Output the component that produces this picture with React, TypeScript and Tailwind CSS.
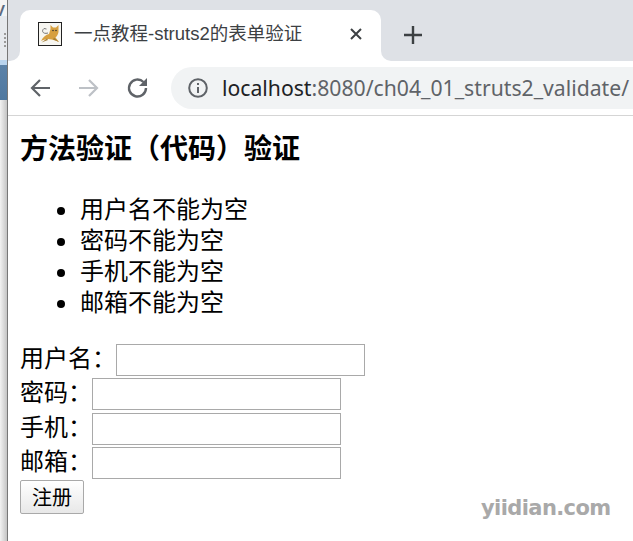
const cjk = "font-['Liberation_Sans','Noto_Sans_CJK_SC',sans-serif]";

function Row({ label, gap, mt }: { label: string; gap: string; mt: string }) {
  return (
    <div className={`flex items-center h-[32px] ${mt}`}>
      <span className={`${gap} pb-[3px]`}>{label}</span>
      <div className="w-[249px] h-[32px] border border-[#a9a9a9] bg-white shrink-0" />
    </div>
  );
}

function Item({ text }: { text: string }) {
  return (
    <li className="flex items-center">
      <span className="w-[8px] h-[8px] rounded-full bg-black mr-[15px] mt-[2px] shrink-0" />
      {text}
    </li>
  );
}

function Tomcat() {
  return (
    <svg width="24" height="24" viewBox="0 0 24 24" className="shrink-0">
      <rect x="0.5" y="0.5" width="23" height="23" fill="#f7f6f1" stroke="#222" />
      <path d="M3 19 C5 15 8 12.5 11 12 L12.5 7 L12.5 3 L15 5.5 L18 5.5 L20.5 3 L20.5 10 C20 13 18.5 14.5 17.5 15.5 L21 20 L17.5 18.5 C15 18 12 17 10 17 C7.5 17 5 18 3 19Z" fill="#d7a040" />
      <path d="M16 15.5 L21 20 L15 17.5Z M9 16.5 L3.5 20.5 L10 18Z" fill="#a5803a" />
      <path d="M10 11 C5 12.5 3 9 6 6.5 L8.5 7" fill="none" stroke="#777" strokeWidth="1" />
      <circle cx="15" cy="8.5" r="0.8" fill="#333" />
      <circle cx="18" cy="8.5" r="0.8" fill="#333" />
    </svg>
  );
}

export default function App() {
  return (
    <div className={`relative w-[633px] h-[541px] overflow-hidden bg-white flex ${cjk}`}>
      <div className="w-[8px] shrink-0 flex flex-col border-r border-[#777] overflow-hidden">
        <div className="h-[16px] bg-[#f4f4f4] text-[#5a6a80] text-[24px] leading-[20px] -ml-[7px] overflow-visible">y</div>
        <div className="h-[44px] bg-[#e6e9ed] relative">
          <div className="absolute left-[4px] top-[17px] w-[2px] h-[14px] bg-[repeating-linear-gradient(to_bottom,#9a9a9a_0,#9a9a9a_2px,transparent_2px,transparent_4px)]" />
        </div>
        <div className="h-[5px] bg-[#b9d4ee]" />
        <div className="h-[35px] bg-gradient-to-b from-[#5b82a8] to-[#4f78a0]" />
        <div className="flex-1 bg-gradient-to-r from-[#f2f2f2] to-[#c4c4c4]" />
      </div>
      <div className="flex-1 min-w-0 flex flex-col">
        <div className="h-[61px] bg-[#dee1e6] flex items-end pl-[12px] shrink-0">
          <div className="relative w-[361px] h-[51px] bg-white rounded-t-[10px] flex items-center pl-[18px] pr-[18px] pb-[3px]">
            <div className="absolute -left-[12px] bottom-0 w-[12px] h-[12px] bg-white">
              <div className="w-full h-full bg-[#dee1e6] rounded-br-[10px]" />
            </div>
            <div className="absolute -right-[12px] bottom-0 w-[12px] h-[12px] bg-white">
              <div className="w-full h-full bg-[#dee1e6] rounded-bl-[10px]" />
            </div>
            <Tomcat />
            <span className="ml-[12px] text-[18.5px] text-[#3c4043] whitespace-nowrap flex-1">一点教程-struts2的表单验证</span>
            <svg width="14" height="14" viewBox="0 0 14 14" className="shrink-0">
              <path d="M2 2 L12 12 M12 2 L2 12" stroke="#3c4043" strokeWidth="2" />
            </svg>
          </div>
          <div className="ml-[23px] mb-[17px]">
            <svg width="18" height="18" viewBox="0 0 18 18">
              <path d="M9 0 V18 M0 9 H18" stroke="#3c4043" strokeWidth="2.4" />
            </svg>
          </div>
        </div>
        <div className="h-[55px] shrink-0 flex items-center border-b border-[#d5d5d5] bg-white pl-[21px]">
          <svg width="22" height="22" viewBox="0 0 22 22" className="shrink-0">
            <path d="M21 11 H3 M11 3 L3 11 L11 19" fill="none" stroke="#5f6368" strokeWidth="2.2" />
          </svg>
          <svg width="22" height="22" viewBox="0 0 22 22" className="ml-[27px] shrink-0">
            <path d="M1 11 H19 M11 3 L19 11 L11 19" fill="none" stroke="#bdc1c6" strokeWidth="2.2" />
          </svg>
          <svg width="24" height="24" viewBox="0 0 24 24" className="ml-[26px] shrink-0">
            <path d="M20 12 A8.5 8.5 0 1 1 17.5 6" fill="none" stroke="#5f6368" strokeWidth="2.4" />
            <path d="M21 2 V10 H13Z" fill="#5f6368" />
          </svg>
          <div className="ml-[21px] flex-1 h-[42px] bg-[#f1f3f4] rounded-l-[21px] flex items-center pl-[17px] overflow-hidden">
            <svg width="20" height="20" viewBox="0 0 20 20" className="shrink-0">
              <circle cx="10" cy="10" r="8.8" fill="none" stroke="#5f6368" strokeWidth="2" />
              <path d="M10 9 V15 M10 5 V7" stroke="#5f6368" strokeWidth="2" />
            </svg>
            <span className="ml-[14px] text-[21.2px] whitespace-nowrap text-[#5f6368] font-['Noto_Sans',sans-serif]">
              <span className="text-[#202124]">localhost</span>:8080/ch04_01_struts2_validate/
            </span>
          </div>
        </div>
        <div className="pl-[12px] text-[24px] leading-[31px] text-black">
          <h1 className="text-[28px] font-bold leading-[36px] mt-[16px]">方法验证（代码）验证</h1>
          <ul className="pl-[37px] mt-[26px]">
            <Item text="用户名不能为空" />
            <Item text="密码不能为空" />
            <Item text="手机不能为空" />
            <Item text="邮箱不能为空" />
          </ul>
          <form className="mt-[26px]">
            <Row label="用户名：" gap="w-[96px]" mt="mt-0" />
            <Row label="密码：" gap="w-[72px]" mt="mt-[2px]" />
            <Row label="手机：" gap="w-[72px]" mt="mt-[3px]" />
            <Row label="邮箱：" gap="w-[72px]" mt="mt-[2px]" />
            <button type="button" className="mt-[1px] w-[64px] h-[34px] border border-[#a9a9a9] rounded-[2px] bg-gradient-to-b from-white to-[#e8e8e8] text-[20px] leading-none text-black flex items-center justify-center pt-[1px]">注册</button>
          </form>
        </div>
      </div>
      <div className="absolute left-[481px] top-[492px] text-[21px] leading-[32px] font-bold text-[#a9a9a9] font-['DejaVu_Sans',sans-serif] tracking-[-0.6px]">yiidian.com</div>
    </div>
  );
}
